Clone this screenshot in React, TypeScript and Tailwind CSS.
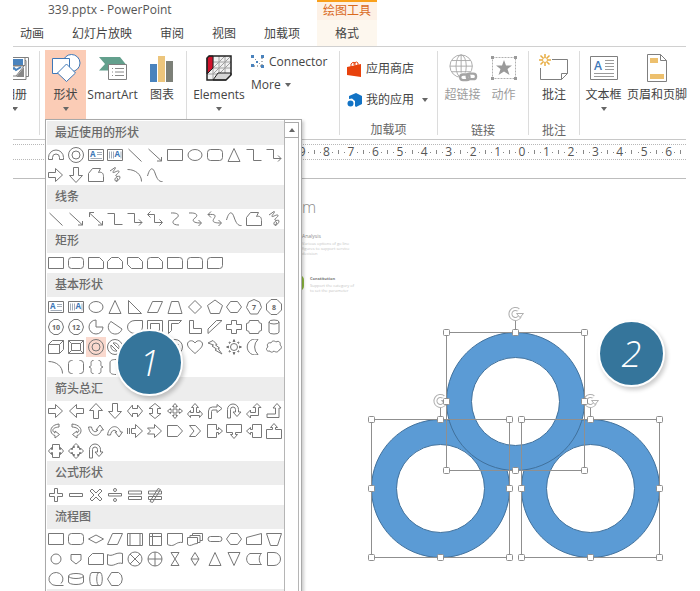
import type { ReactNode } from "react";
import clsx from "clsx";

// Outlines on a 16x16 grid, keyed by shape name.
const outlines: Record<string, string> = {
  line: "M1.5 2l13 12.5",
  arrow: "M1.5 2l13 12M14.5 10v4H10",
  doubleArrow: "M1.5 2l13 12M14.5 10v4H10M6 1.5H1.5V6",
  elbow: "M.5 2.5h7v11h8",
  elbowArrow: "M.5 2.5h7v9h7.500M12 8.500l3 3-3 3",
  elbowDouble: "M3.500.5l-3 3 3 3M1 3.500h6.500v8H15M12.500 8.500l3 3-3 3",
  curve: "M4 2c8-.5 9 3 5 5.500s-5 6.500 3 6.500",
  curveArrow: "M2 2c9-.5 9 3 6 5s-3 5 6 5M11.500 9l3 3-3 3",
  curveDouble: "M4 .5l-3 3 3 3M1 3.500c8-.5 8 1 6 4s-1 4.500 7 4.500M11.500 9l3 3-3 3",
  wave: "M.5 9C3 0 6 0 8 6s4 9 7.500 8.500",
  freeform: "M.5 6.500l4-5h8l-2 4c3.500-1 5 1 5 4v5H.5z",
  scribble: "M3 4l5-3.500c2 0-3 4.500-2 5s6-3 6-1-4 3-3 4.500 4-1 4 1-2 4-4 4-1-3.500.5-3.500 1 3 0 4.500",
  arc: "M.5 2.500c8 0 14 5 14 12",
  rect: "M.5 2.500h15v11H.5z",
  oval: "M1 8a7 5.500 0 1 0 14 0a7 5.500 0 1 0-14 0",
  roundRect: "M3.500 2.500h9a3 3 0 0 1 3 3v5a3 3 0 0 1-3 3h-9a3 3 0 0 1-3-3v-5a3 3 0 0 1 3-3z",
  snip1: "M.5 2.500h11l4 4v7H.5z",
  snip2: "M4.500 2.500h7l4 4v7H.5v-7z",
  snipDiagonal: "M.5 2.500h11l4 4v7h-11l-4-4z",
  snipRound: "M3.500 2.500h8l4 4v7H.5v-8a3 3 0 0 1 3-3z",
  round1: "M.5 2.500h12a3 3 0 0 1 3 3v8H.5z",
  round2: "M3.500 2.500h9a3 3 0 0 1 3 3v8H.5v-8a3 3 0 0 1 3-3z",
  roundDiagonal: "M3.500 2.500h12v8a3 3 0 0 1-3 3H.5v-8a3 3 0 0 1 3-3z",
  triangle: "M8 1.500l6 13H2z",
  rightTriangle: "M1.500 1.500v13h13z",
  parallelogram: "M5.500 2.500h10l-5 11H.5z",
  trapezoid: "M4.500 2.500h7l3.500 12H1z",
  diamond: "M8 1.500L14.500 8 8 14.500 1.500 8z",
  pentagon: "M8 1l7.500 5.500-3 8h-9l-3-8z",
  hexagon: "M4.500 2.500h7l4 5.500-4 5.500h-7L.5 8z",
  heptagon: "M8 .5l5.500 2.500 2 5.500-4 6.500h-7l-4-6.500L2.500 3z",
  octagon: "M5 .5h6L15.500 5v6L11 15.500H5L.5 11V5z",
  decagon: "M6 .5h4l4 3L15.500 8 14 12.500l-4 3H6l-4-3L.5 8 2 3.500z",
  pie: "M8 1a7 7 0 1 0 7 7H8z",
  chord: "M4 2.500A7 7 0 1 0 15 10z",
  teardrop: "M15.500 1.500V8A7.500 6.500 0 1 1 8 1.500z",
  frame: "M.5 1.500h15v13H.5zM3.500 4.500h9v7h-9z",
  halfFrame: "M1.500 14.500v-13h13l-3 3h-7v7z",
  lShape: "M2.500 1.500h4v8h8v5h-12z",
  diagonalStripe: "M1 14.500V10l8.500-8.500h5.500z",
  cross: "M5.500 1.500h5v4h5v5h-5v4h-5v-4h-5v-5h5z",
  plaque: "M3.500 1.500h9a3 3 0 0 0 3 3v7a3 3 0 0 0-3 3h-9a3 3 0 0 0-3-3v-7a3 3 0 0 0 3-3z",
  can: "M3 3a5 2 0 0 0 10 0A5 2 0 0 0 3 3v10a5 2 0 0 0 10 0V3",
  cube: "M.5 5.500l4-4h11v9l-4 4H.5zM.5 5.500h11v9M11.500 5.500l4-4",
  bevel: "M.5 1.500h15v13H.5zM3.500 4.500h9v7h-9zM.5 1.500l3 3M15.500 1.500l-3 3M.5 14.500l3-3M15.500 14.500l-3-3",
  donut: "M.5 8a7.500 7.500 0 1 0 15 0a7.500 7.500 0 1 0-15 0M4 8a4 4 0 1 0 8 0a4 4 0 1 0-8 0",
  noSymbol: "M.5 8a7.500 7.500 0 1 0 15 0a7.500 7.500 0 1 0-15 0M6 4a5 5 0 0 1 6 6zM4 6a5 5 0 0 0 6 6z",
  blockArc: "M.5 12.500v-2a7.500 7.500 0 0 1 15 0v2h-4v-2a3.500 3.500 0 0 0-7 0v2z",
  foldedCorner: "M.5 1.500h15v9l-4 4H.5zM11.500 14.500v-4h4",
  smiley: "M.5 8a7.500 7.500 0 1 0 15 0a7.500 7.500 0 1 0-15 0M4 10q4 4 8 0M5 5v1M11 5v1",
  heart: "M8 14.500C3 10 .5 8 .5 5s5-5 7.500-1c2.500-4 7.500-2 7.500 1s-2.500 5-7.500 9.500z",
  lightning: "M1 4l5-2.500 4 4-1.500.5 4 3-1.500.5 4 5.500-7-4 1.500-1-4.500-3 1.500-1z",
  sun: "M4.500 8a3.500 3.500 0 1 0 7 0a3.500 3.500 0 1 0-7 0M7 2.500l1-2 1 2zM7 13.500l1 2 1-2zM2.500 7l-2 1 2 1zM13.500 7l2 1-2 1zM3 3l1.500.5-1 1zM13 3l-1.500.5 1 1zM3 13l.5-1.500 1 1zM13 13l-.5-1.500-1 1z",
  moon: "M12 .5a8 8 0 1 0 0 15A10 10 0 0 1 12 .5z",
  cloud: "M4 12C0 13-.5 9 2 8c-2-3 1-5 3-4 1-3 4-2 5-1 3-2 5 1 4 3 2 1 2 4-1 5-1 3-4 2-5 1-2 2-4 1-4 0z",
  brackets: "M4.500 1.500h-1a3 3 0 0 0-3 3v7a3 3 0 0 0 3 3h1M11.500 1.500h1a3 3 0 0 1 3 3v7a3 3 0 0 1-3 3h-1",
  braces: "M5.500 1.500c-5 0 0 6-4.500 6.500 4.500.5-.5 6.500 4.500 6.500M10.500 1.500c5 0 0 6 4.500 6.500-4.500.5.5 6.500-4.500 6.500",
  leftBracket: "M9 .5c-4 0-6 1-6 3.500v8c0 2.500 2 3.500 6 3.500",
  rightBracket: "M7 1.500c3 0 4 1 4 3v7c0 2-1 3-4 3",
  leftBrace: "M10 1.500c-5 0 0 6-4.500 6.500 4.500.5-.5 6.500 4.500 6.500",
  rightBrace: "M6 1.500c5 0 0 6 4.500 6.500-4.500.5.5 6.500-4.500 6.500",
  right: "M.5 5.500h7v-4L14.500 8l-7 6.500v-4h-7z",
  left: "M15.500 5.500h-7v-4L1.500 8l7 6.500v-4h7z",
  up: "M5.500 15.500v-8h-4L8 .5l6.500 7h-4v8z",
  down: "M5.500 .5v8h-4l6.500 7 6.500-7h-4v-8z",
  leftRight: "M.5 8l5-6v3.500h5V2l5 6-5 6v-3.500h-5V14z",
  upDown: "M8 .5l6 5h-3.500v5H14l-6 5-6-5h3.500v-5H2z",
  quad: "M8 .5l2.500 3H9V7h3.500V5.500l3 2.500-3 2.500V9H9v3.500h1.500L8 15.500l-2.500-3H7V9H3.500v1.500L.5 8l3-2.500V7H7V3.500H5.500z",
  triple: "M8 .5l3.500 4h-2v5h3V7.500l3 3.500-3 3.500v-2h-9v2L.5 11l3-3.500v2h3v-5h-2z",
  bent: "M1.500 15.500V8a4 4 0 0 1 4-4H10V1.500l5 4-5 4V7H6a1.500 1.500 0 0 0-1.500 1.500v7z",
  uTurn: "M1.500 15V6.500a5.500 5.500 0 0 1 11 0V9H15l-4 4.500L7 9h2.500V6.500a2.500 2.500 0 0 0-5 0V15z",
  leftUp: "M.5 11l4-4v2.500h5v-5H7l4-4 4 4h-2.500v8h-8V15z",
  bentUp: "M1 14.500v-3.500h8.500V5H7l4-4.500L15 5h-2v9.500z",
  curvedRight: "M11 1C1 2 1 11 7 12.500v2.500l4.500-3.500L7 8v2C3.500 8 4 4.500 11 4z",
  curvedLeft: "M4 1c11 1 11 10 5 11.500V15l-4.500-3.500L9 8v2c3.500-2 2-5.500-5-6z",
  curvedUp: "M.5 4h3c1 5 4 6 6.500 3H8l4-5 3.500 5h-2C11 15 2 14 .5 4z",
  curvedDown: "M.5 12h3c1-5 4-6 6.500-3H8l4 5 3.500-5h-2C11 1 2 2 .5 12z",
  striped: "M.5 5v6M2.500 5v6M4.500 5.500h4v-4L15.500 8l-7 6.500v-4h-4z",
  notched: "M.5 5h7V1.500l7 6.500-7 6.500V11h-7l3-3z",
  pentagonArrow: "M.5 2.500h10L15.500 8l-5 5.500H.5z",
  chevron: "M2.500 2.500h6l5 5.500-5 5.500h-6L7 8z",
  calloutRight: "M.5 1.500h9v5h2v-2l4 3.500-4 3.500v-2h-2v5h-9z",
  calloutDown: "M.5 1.500h15v8h-6v2h2l-3.500 4-3.500-4h2v-2h-6z",
  calloutLeft: "M15.500 1.500h-9v5h-2v-2L.5 8l4 3.500v-2h2v5h9z",
  calloutUp: "M.5 15.500v-9h6v-2h-2L8 .5l3.500 4h-2v2h6v9z",
  calloutLeftRight: "M4.500 1.500h7v5h1v-2l3 3.500-3 3.500v-2h-1v5h-7v-5h-1v2L.5 8l3-3.500v2h1z",
  calloutQuad: "M8 .5l3 3H9.500v1h2v2h1V5l3 3-3 3V9.500h-1v2h-2v1H11l-3 3-3-3h1.500v-1h-2v-2h-1V11l-3-3 3-3v1.500h1v-2h2v-1H5z",
  plus: "M6.500 1.500h3v5h5v3h-5v5h-3v-5h-5v-3h5z",
  minus: "M1.500 6.500h13v3h-13z",
  times: "M4 2l4 4 4-4 2 2-4 4 4 4-2 2-4-4-4 4-2-2 4-4-4-4z",
  divide: "M1.500 6.500h13v2.500h-13zM6.500 3a1.500 1.500 0 1 0 3 0a1.500 1.500 0 1 0-3 0M6.500 13a1.500 1.500 0 1 0 3 0a1.500 1.500 0 1 0-3 0",
  equal: "M1.500 4h13v3h-13zM1.500 9.500h13v3h-13z",
  notEqual: "M1.500 4h13v3h-13zM1.500 9.500h13v3h-13zM3 14.500l8-13 2.500 1-8 13z",
  decision: "M8 4l7.500 4L8 12 .5 8z",
  predefined: "M.5 2.500h15v12H.5zM3 2.500v12M13 2.500v12",
  internal: "M2.500 2.500h12v12h-12zM5.500 2.500v12M2.500 5.500h12",
  document: "M.5 2.500h15v9c-6-1-7 3-11 3-2 0-4-1-4-1z",
  multidocument: "M.5 6.500h10v6c-4 0-5 2-8 2l-2-1zM3 6.500v-2h10v7h-2.500M5.500 4.500v-2h10v7H13",
  terminator: "M3.500 5.500h9a2.500 2.500 0 0 1 0 5h-9a2.500 2.500 0 0 1 0-5z",
  manualInput: "M.5 6.500l15-4v11H.5z",
  manualOperation: "M.5 2.500h15l-4 12h-7z",
  connector: "M3 8a5 5 0 1 0 10 0a5 5 0 1 0-10 0",
  offPage: "M3 3.500h10V9l-5 4-5-4z",
  card: "M.5 6.500l4-4h11v11H.5z",
  tape: "M.5 3.500c5 3 8-3 15-1v10c-6-2-8 4-15 1z",
  summing: "M1 8a7 7 0 1 0 14 0a7 7 0 1 0-14 0M3 3l10 10M13 3L3 13",
  or: "M1 8a7 7 0 1 0 14 0a7 7 0 1 0-14 0M8 1v14M1 8h14",
  collate: "M4 1.500h8l-8 13h8z",
  sort: "M8 1.500L12 8l-4 6.500L4 8zM4 8h8",
  extract: "M8 1.500l6 13H2z",
  merge: "M2 1.500h12l-6 13z",
  storedData: "M4 2.500h11.500c-3 2-3 9 0 11H4c-4.500-2-4.500-9 0-11z",
  delay: "M1.500 1.500H8a6.500 6.500 0 0 1 0 13H1.500z",
  sequential: "M8 14.500a7 6.500 0 1 1 5-2M8 14.500h7.500",
  disk: "M.5 5a7.500 2.500 0 0 0 15 0A7.500 2.500 0 0 0 .5 5v6a7.500 2.500 0 0 0 15 0V5",
  directAccess: "M4 1.500c-3 0-3 13 0 13h8c3 0 3-13 0-13zM11 1.500c-3 0-3 13 0 13",
  display: "M4.500 1.500h7a6 7 0 0 1 0 13h-7L.5 8z",
};

type Section = { title: string; shapes: string[] };

const sections: Section[] = [
  {
    title: "最近使用的形状",
    shapes:
      "blockArc donut textBox verticalTextBox line arrow rect oval roundRect triangle elbow elbowArrow right down freeform scribble arc wave".split(
        " "
      ),
  },
  {
    title: "线条",
    shapes:
      "line arrow doubleArrow elbow elbowArrow elbowDouble curve curveArrow curveDouble wave freeform scribble".split(" "),
  },
  {
    title: "矩形",
    shapes: "rect roundRect snip1 snip2 snipDiagonal snipRound round1 round2 roundDiagonal".split(" "),
  },
  {
    title: "基本形状",
    shapes:
      "textBox verticalTextBox oval triangle rightTriangle parallelogram trapezoid diamond pentagon hexagon heptagon octagon decagon dodecagon pie chord teardrop frame halfFrame lShape diagonalStripe cross plaque can cube bevel donut noSymbol blockArc foldedCorner smiley heart lightning sun moon cloud arc brackets braces leftBracket rightBracket leftBrace rightBrace".split(
        " "
      ),
  },
  {
    title: "箭头总汇",
    shapes:
      "right left up down leftRight upDown quad triple bent uTurn leftUp bentUp curvedRight curvedLeft curvedUp curvedDown striped notched pentagonArrow chevron calloutRight calloutDown calloutLeft calloutUp calloutLeftRight calloutQuad uTurn".split(
        " "
      ),
  },
  { title: "公式形状", shapes: "plus minus times divide equal notEqual".split(" ") },
  {
    title: "流程图",
    shapes:
      "rect roundRect decision parallelogram predefined internal document multidocument terminator hexagon manualInput manualOperation connector offPage card tape summing or collate sort extract merge storedData delay sequential disk directAccess display".split(
        " "
      ),
  },
];

const labels: Record<string, string> = { heptagon: "7", octagon: "8", decagon: "10", dodecagon: "12" };

function ShapeGlyph({ name }: { name: string }) {
  if (name === "textBox" || name === "verticalTextBox") {
    const vertical = name === "verticalTextBox";
    return (
      <svg viewBox="0 0 16 16" className="size-4" fill="none" stroke="#777777">
        <path d="M.5 2.500h15v11H.5z" />
        <path
          stroke="#a3adba"
          d={vertical ? "M2.500 4.500v7M4.500 4.500v7M6.500 4.500v7M14 4.500v7" : "M9 5.500h5M9 7.500h5M2.500 11.500H14"}
        />
        <text x={vertical ? 7.5 : 2} y="10" fontSize="8" fontWeight="700" fill="#3e78b8" stroke="none">
          A
        </text>
      </svg>
    );
  }

  return (
    <svg viewBox="0 0 16 16" className="size-4" fill="none" stroke="#777777">
      <path d={outlines[name === "dodecagon" ? "decagon" : name]} />
      {labels[name] && (
        <text x="8" y="11" fontSize="7" fontWeight="700" textAnchor="middle" fill="#666666" stroke="none">
          {labels[name]}
        </text>
      )}
    </svg>
  );
}

function Caret({ up }: { up?: boolean }) {
  return (
    <svg viewBox="0 0 6 4" className={clsx("shrink-0", up ? "h-1 w-2" : "h-1 w-1.5")} fill="#666666">
      <path d={up ? "M3 0l3 4H0z" : "M0 0h6L3 4z"} />
    </svg>
  );
}

function RibbonButton({
  icon,
  label,
  caret,
  className,
}: {
  icon: ReactNode;
  label: string;
  caret?: boolean;
  className?: string;
}) {
  return (
    <button className={clsx("flex shrink-0 flex-col items-center pt-1", className)}>
      <span className="flex h-7 items-center justify-center">{icon}</span>
      <span className="mt-[5px] whitespace-nowrap leading-4">{label}</span>
      {caret && (
        <span className="mt-1">
          <Caret />
        </span>
      )}
    </button>
  );
}

function Divider() {
  return <div className="my-1 w-px shrink-0 bg-[#dcdcdc]" />;
}

function Badge({ value, className }: { value: string; className: string }) {
  return (
    <div
      className={clsx(
        "absolute flex size-[67px] items-center justify-center rounded-full border-2 border-white bg-[#35759b] text-4xl font-light italic text-white shadow-[2px_3px_4px_rgba(0,0,0,0.2)]",
        className
      )}
    >
      {value}
    </div>
  );
}

function ShapesMenu() {
  return (
    <div className="absolute top-full left-0 z-10 flex w-[257px] border border-[#a9a9a9] bg-white shadow-[2px_2px_3px_rgba(0,0,0,0.2)]">
      <div className="w-[239px] border-r border-[#b5b5b5] pt-px">
        {sections.map((section) => (
          <section key={section.title}>
            <h3 className="ml-px h-6 bg-[#ededed] pl-2 leading-6 font-medium text-[#6a6a6a]">{section.title}</h3>
            <div className="grid grid-cols-12">
              {section.shapes.map((name, i) => (
                <button
                  key={i}
                  aria-label={name}
                  className={clsx(
                    "flex h-5 items-center justify-center",
                    section.title === "基本形状" && name === "donut" && "bg-[#fad9ce]"
                  )}
                >
                  <ShapeGlyph name={name} />
                </button>
              ))}
            </div>
          </section>
        ))}
        <div className="ml-px h-6 bg-[#ededed]" />
      </div>
      <div className="flex flex-1 flex-col pt-0.5 pr-0.5">
        <button
          aria-label="向上滚动"
          className="flex h-4 items-center justify-center border border-l-0 border-[#a9a9a9] bg-white"
        >
          <Caret up />
        </button>
        <div className="flex-1 border-r border-[#b5b5b5]" />
      </div>
      <Badge value="1" className="top-[209px] left-[70px]" />
    </div>
  );
}

function TitleBar() {
  return (
    <header className="flex border-b border-[#d0d0d0]">
      <div>
        <h1 className="h-5 pl-[35px] leading-5 text-[#555555]">339.pptx - PowerPoint</h1>
        <nav className="flex gap-7 pt-0.5 pl-[7px]">
          {["动画", "幻灯片放映", "审阅", "视图", "加载项"].map((tab) => (
            <button key={tab} className="leading-6">
              {tab}
            </button>
          ))}
        </nav>
      </div>
      <div className="ml-[17px] flex w-[60px] flex-col items-center border-t-2 border-[#f9a01b] bg-[#fdf7ee]">
        <span className="h-[18px] w-full bg-[#fdf1e6] text-center leading-[18px] text-[#d9691e]">绘图工具</span>
        <button className="pt-0.5 leading-6">格式</button>
      </div>
    </header>
  );
}

function Ribbon() {
  return (
    <div className="flex h-[93px] border-b border-[#c8c8c8]">
      <div className="flex w-[26px] shrink-0 justify-end overflow-hidden pt-[3px] pr-2">
        <RibbonButton
          className="w-8"
          label="相册"
          caret
          icon={
            <svg viewBox="0 0 28 28" className="size-7" fill="none" stroke="#7f7f7f">
              <path d="M8 3.500h19.500v19h-19" />
              <path d="M6 6.500h19v19H4" fill="#fff" />
              <path d="M4 3.500h20v8H4z" fill="#fff" />
              <path d="M4 5h18v6H4z" fill="#4a83bd" stroke="none" />
              <path d="M5 21v-9h18l-8 10H5z" fill="#fff" />
              <path d="M8 18l5-4 2 2 5-3" stroke="#4a83bd" strokeWidth="2" />
              <path d="M23 13v10h-8z" fill="#888" stroke="none" />
            </svg>
          }
        />
      </div>
      <Divider />
      <div className="relative ml-[5px] flex h-[72px] w-[41px] shrink-0 pt-[3px]">
        <RibbonButton
          className="w-full bg-[#fbccb6]"
          label="形状"
          caret
          icon={
            <svg viewBox="0 0 30 28" className="h-7 w-[30px]" fill="#fff" stroke="#3e78b8">
              <circle cx="20.500" cy="9" r="8.500" />
              <path d="M1.500 4.500h17v15h-17z" />
              <path d="M15.500 10l9 9-9 8.500-9-8.500z" />
            </svg>
          }
        />
        <ShapesMenu />
      </div>
      <div className="flex shrink-0 pt-[3px]">
        <RibbonButton
          className="w-[53px]"
          label="SmartArt"
          icon={
            <svg viewBox="0 0 30 28" className="h-7 w-[30px]">
              <path d="M1 3h21l6 7.500-5 6H1l6-6.500z" fill="#63a08d" />
              <path d="M10.500 10.500h18v15h-18z" fill="#fff" stroke="#7f7f7f" />
              <path d="M14 14.500h1m2 0h9M14 18h1m2 0h9M14 21.500h1m2 0h9" stroke="#8a8a8a" />
            </svg>
          }
        />
        <RibbonButton
          className="w-[46px]"
          label="图表"
          icon={
            <svg viewBox="0 0 24 28" className="h-7 w-6">
              <path d="M0 10h7v18H0z" fill="#4a83bd" />
              <path d="M8 2h7v26H8z" fill="#ecc57c" />
              <path d="M16 7h7v21h-7z" fill="#7c8078" />
            </svg>
          }
        />
      </div>
      <div className="w-px shrink-0" />
      <Divider />
      <div className="flex shrink-0 pt-[3px]">
        <RibbonButton
          className="w-16"
          label="Elements"
          caret
          icon={
            <svg viewBox="0 0 26 26" className="size-[26px]" fill="none">
              <path d="M3 1h22v19l-5 5H1V3z" fill="#f1f1f1" />
              <path d="M7 1v24M13 1v24M19 1v24M1 7h24M1 13h24M1 19h24M7 13L19 1M7 19L25 1M13 19L25 7" stroke="#a0a0a0" />
              <path d="M3 1h4v12l-6 6V3z" fill="#d0112b" stroke="#222" />
              <path d="M12 18h13v2l-5 5H7z" fill="#d5d5d5" stroke="#222" />
              <path d="M3 1h22v19l-5 5H1V3z" stroke="#222" strokeWidth="1.500" />
            </svg>
          }
        />
        <div className="flex w-[88px] flex-col items-start pt-1">
          <button className="flex items-center gap-1 leading-4">
            <svg viewBox="0 0 14 14" className="size-3.5">
              <path d="M2 2l9 9M3 11h8V2" fill="none" stroke="#666" strokeDasharray="1 2" />
              <path d="M0 0h3v3H0zM10 0h3v3h-3zM0 9h3v3H0zM10 10h3v3h-3zM5 6h2v2H5z" fill="#4a83bd" />
            </svg>
            Connector
          </button>
          <button className="mt-[7px] flex items-center gap-1 leading-4">
            More
            <Caret />
          </button>
        </div>
      </div>
      <Divider />
      <div className="flex w-[97px] shrink-0 flex-col pt-[14px] pl-[7px]">
        <button className="flex items-center gap-1 leading-4">
          <svg viewBox="0 0 15 16" className="h-4 w-[15px]">
            <path d="M0 6l14-3v13l-14-2z" fill="#e8420c" />
            <path d="M4 6V3q2-3 4-1v3M7 4V2q3-2 4 0v2" fill="none" stroke="#e8420c" />
          </svg>
          应用商店
        </button>
        <button className="mt-[15px] flex items-center gap-1 leading-4">
          <svg viewBox="0 0 15 16" className="h-4 w-[15px]" fill="#1273c5">
            <path d="M2 4l7-3 6 3v8l-6 3-1-1V9L5 6.500 2 7z" />
            <circle cx="3.500" cy="11.500" r="3" />
          </svg>
          我的应用
          <span className="ml-1">
            <Caret />
          </span>
        </button>
        <span className="mt-[14px] pr-[7px] text-center leading-4 text-[#666666]">加载项</span>
      </div>
      <Divider />
      <div className="flex w-[90px] shrink-0 flex-col pt-[3px]">
        <div className="flex text-[#9c9c9c]">
          <RibbonButton
            className="w-[49px]"
            label="超链接"
            icon={
              <svg viewBox="0 0 32 30" className="h-7 w-8" fill="none" stroke="#a9a9a9">
                <circle cx="14" cy="13" r="12" />
                <ellipse cx="14" cy="13" rx="5.500" ry="12" />
                <path d="M14 1v24M2 13h24M4 7h20M4 19h20" />
                <path d="M13 20h18v10H13z" fill="#fff" stroke="none" />
                <rect x="13" y="22" width="10" height="6" rx="3" strokeWidth="2.500" stroke="#a4a4a4" />
                <rect x="20" y="21" width="10" height="6" rx="3" strokeWidth="2.500" stroke="#a4a4a4" />
              </svg>
            }
          />
          <RibbonButton
            className="w-[33px]"
            label="动作"
            icon={
              <svg viewBox="0 0 28 28" className="size-7" fill="#9a9a9a">
                <path d="M2.500 3.500h23v21h-23z" fill="none" stroke="#b0b0b0" strokeDasharray="2 1" />
                <path d="M1 2h3v3H1zM24 2h3v3h-3zM1 23h3v3H1zM24 23h3v3h-3z" />
                <path d="M14 6l2 5.500h6l-4.500 3.500 2 6L14 17.500 8.500 21l2-6L6 11.500h6z" />
              </svg>
            }
          />
        </div>
        <span className="mt-5 text-center leading-4 text-[#666666]">链接</span>
      </div>
      <Divider />
      <div className="flex w-[50px] shrink-0 flex-col items-center pt-[3px]">
        <RibbonButton
          label="批注"
          icon={
            <svg viewBox="0 0 30 28" className="h-7 w-[30px]" fill="none">
              <path d="M13 5.500h15.500v14l-6 6h-21V14" stroke="#7f7f7f" />
              <path d="M28.500 19.500h-6v6" stroke="#7f7f7f" />
              <path d="M6 0v3M6 9v3M0 6h3M9 6h3M1.500 1.500l2.500 2.500M8 8l2.500 2.500M10.500 1.500L8 4M4 8l-2.500 2.500" stroke="#e8ad42" strokeWidth="1.500" />
              <circle cx="6" cy="6" r="2.500" stroke="#e8ad42" />
            </svg>
          }
        />
        <span className="mt-5 leading-4 text-[#666666]">批注</span>
      </div>
      <Divider />
      <div className="flex shrink-0 pt-[3px]">
        <RibbonButton
          className="w-[47px]"
          label="文本框"
          caret
          icon={
            <svg viewBox="0 0 28 26" className="h-[26px] w-7">
              <path d="M.5 1.500h27v23H.5z" fill="#fff" stroke="#7f7f7f" />
              <path d="M15 5.500h9M15 8.500h9M15 11.500h9M15 14.500h9M4 18.500h20M4 21.500h20" stroke="#9a9a9a" />
              <text x="4" y="15" fontSize="12" fontWeight="600" fill="#3e78b8">
                A
              </text>
            </svg>
          }
        />
        <RibbonButton
          className="w-[60px]"
          label="页眉和页脚"
          icon={
            <svg viewBox="0 0 22 28" className="h-7 w-[22px]">
              <path d="M1.500 .5h13l6 6v21h-19z" fill="#fff" stroke="#7f7f7f" />
              <path d="M14.500 .5v6h6" fill="none" stroke="#7f7f7f" />
              <path d="M4 4h8v5H4zM4 20h14v5H4z" fill="#edc06e" />
            </svg>
          }
        />
      </div>
    </div>
  );
}

function Ruler() {
  const marks = [9, 8, 7, 6, 5, 4, 3, 2, 1, 0, 1, 2, 3, 4, 5, 6];

  return (
    <div className="border-b border-[#bdbdbd] pt-1 pb-[18px]">
      <div className="overflow-hidden border-y border-dotted border-[#b8b8b8]">
        <div className="-mr-1 ml-[286px] flex">
          {marks.map((mark, i) => (
            <div key={i} className="grid h-3.5 flex-1 grid-cols-4 items-center justify-items-center leading-[14px] text-[#555555]">
              <span>{mark}</span>
              <i className="size-px bg-[#888888]" />
              <i className="h-1 w-px bg-[#888888]" />
              <i className="size-px bg-[#888888]" />
            </div>
          ))}
        </div>
      </div>
    </div>
  );
}

function Ring({ x, y }: { x: number; y: number }) {
  return (
    <g transform={`translate(${x} ${y})`}>
      <path
        d="M0 69a69 69 0 1 0 138 0a69 69 0 1 0-138 0M25 69a44 44 0 1 1 88 0a44 44 0 1 1-88 0"
        fill="#5b9bd5"
        fillRule="evenodd"
        stroke="#41719c"
      />
    </g>
  );
}

function Selection({ x, y }: { x: number; y: number }) {
  const handles = [
    [0, 0],
    [69, 0],
    [138, 0],
    [0, 69],
    [138, 69],
    [0, 138],
    [69, 138],
    [138, 138],
  ];

  return (
    <g transform={`translate(${x} ${y})`} fill="none" stroke="#8f8f8f">
      <path d="M0 0h138v138H0zM69 0v-12" />
      <path d="M72 -22.500a5 5 0 1 0 1.500 6" stroke="#b0b0b0" strokeWidth="4" />
      <path d="M72 -22.500a5 5 0 1 0 1.500 6" stroke="#ffffff" strokeWidth="2" />
      <path d="M70 -19h7l-3.500 4z" fill="#fff" stroke="#b0b0b0" />
      {handles.map(([hx, hy]) => (
        <rect key={`${hx}-${hy}`} x={hx - 3} y={hy - 3} width="6" height="6" rx="1" fill="#fff" />
      ))}
    </g>
  );
}

const rings = [
  { x: 10.5, y: 119.5 },
  { x: 160.5, y: 119.5 },
  { x: 85.5, y: 32.5 },
];

function Slide() {
  return (
    <main className="relative flex-1">
      <div className="ml-[289px] w-16 pt-[18px] text-[#8c8c8c]">
        <p className="text-base leading-5 font-light">m</p>
        <p className="mt-[15px] text-[5px] leading-2">Analysis</p>
        <p className="mt-px text-[4px] leading-[5px] whitespace-nowrap text-[#c4c4c4]">
          Various options of go line
          <br />
          figures to support service
          <br />
          decision
        </p>
        <div className="relative mt-[19px] pl-2">
          <i className="absolute -left-2 h-4 w-2.5 rounded-full bg-[#8fbb3f]" />
          <p className="text-[4px] leading-2 font-bold text-[#777777]">Constitution</p>
          <p className="text-[4px] leading-[5px] whitespace-nowrap text-[#c4c4c4]">
            Support the category of
            <br />
            to set the parameter
          </p>
        </div>
      </div>
      <svg viewBox="0 0 310 268" className="absolute top-[121px] left-[348px] h-[268px] w-[310px]">
        {rings.map((ring) => (
          <Ring key={`${ring.x}-${ring.y}`} {...ring} />
        ))}
        {rings.map((ring) => (
          <Selection key={`${ring.x}-${ring.y}`} {...ring} />
        ))}
      </svg>
      <Badge value="2" className="top-[141px] left-[585px]" />
    </main>
  );
}

export default function App() {
  return (
    <div className="flex h-screen flex-col overflow-hidden bg-white pr-3.5 pl-[13px] font-['Open_Sans','Noto_Sans_CJK_SC',sans-serif] text-xs text-[#444444]">
      <TitleBar />
      <div className="relative flex min-w-0 flex-1 flex-col">
        <Ribbon />
        <Ruler />
        <Slide />
      </div>
    </div>
  );
}
